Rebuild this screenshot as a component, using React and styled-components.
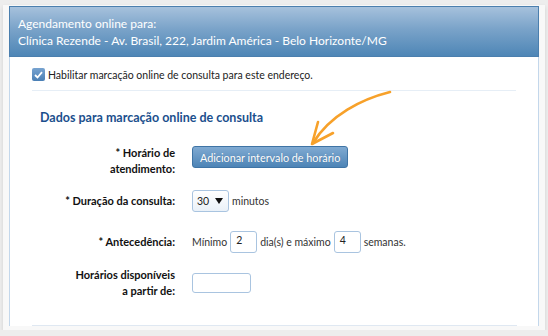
import React from "react";
import styled, { createGlobalStyle } from "styled-components";

const Global = createGlobalStyle`
  body {
    margin: 0;
    background: #ededed;
    font-family: Lato, "Open Sans", sans-serif;
  }
`;

const Page = styled.div`
  padding: 5px 3px 0 3px;
  width: 542px;
`;

const Card = styled.div`
  background: #f8f8f8;
  padding: 1px 6px 4px 6px;
  box-shadow: 0 2px 4px rgba(0, 0, 0, 0.12);
`;

const Header = styled.div`
  background: linear-gradient(to bottom, #a6c1dc 0%, #7aa3c9 45%, #4e86b6 100%);
  border: 1px solid #4b7fae;
  color: #fff;
  font-size: 12px;
  line-height: 17px;
  padding: 8px 8px 7px 8px;
`;

const Body = styled.div`
  position: relative;
  background: #fff;
  border-left: 1px solid #c3d7eb;
  border-right: 1px solid #c3d7eb;
  padding: 11px 22px 0 22px;
  height: 269px;
  box-sizing: border-box;
`;

const CheckRow = styled.label`
  display: flex;
  align-items: center;
  gap: 3px;
  font-size: 10.5px;
  color: #222;
  padding-bottom: 9px;
  border-bottom: 1px solid #e6eef6;
`;

const Check = styled.span`
  width: 13px;
  height: 13px;
  border-radius: 2px;
  background: linear-gradient(#77a3d0, #4a7fb5);
  display: flex;
  align-items: center;
  justify-content: center;
`;

const SectionTitle = styled.h3`
  margin: 19px 0 20px 8px;
  font-size: 12.5px;
  font-weight: 700;
  color: #1b4f8d;
`;

const Form = styled.div`
  display: grid;
  grid-template-columns: 143px 1fr;
  column-gap: 17px;
`;

const Label = styled.div`
  text-align: right;
  font-weight: 700;
  font-size: 11px;
  line-height: 16px;
  color: #111;
  align-self: ${(p) => p.$align || "center"};
`;

const Field = styled.div`
  display: flex;
  align-items: ${(p) => p.$align || "center"};
  gap: 3px;
  font-size: 10.5px;
  color: #333;
`;

const Gap = styled.div`
  grid-column: 1 / 3;
  height: ${(p) => p.$h}px;
`;

const Button = styled.button`
  font-family: inherit;
  font-size: 10.8px;
  color: #fff;
  height: 22px;
  padding: 0 7px;
  margin-top: 1px;
  border: 1px solid #3f74a5;
  border-radius: 3px;
  background: linear-gradient(#80aad2, #4d84b6);
  text-shadow: 0 0 1px rgba(0, 0, 0, 0.2);
`;

const Select = styled.div`
  width: 37px;
  height: 22px;
  box-sizing: border-box;
  border: 1px solid #a9c4e0;
  border-radius: 3px;
  background: linear-gradient(#fff, #eaf1f8);
  display: flex;
  align-items: center;
  justify-content: space-between;
  padding: 0 5px 0 4px;
  font-size: 10.5px;
  color: #222;
`;

const Input = styled.div`
  width: ${(p) => p.$w}px;
  height: ${(p) => p.$hh || 22}px;
  box-sizing: border-box;
  border: 1px solid #a9c4e0;
  border-radius: 3px;
  background: #fff;
  padding: 2px 5px;
  font-size: 10.5px;
  color: #222;
`;

const BottomLine = styled.div`
  position: absolute;
  left: 22px;
  right: 21px;
  bottom: 0;
  border-top: 1px solid #dfe8f2;
`;

const Arrow = styled.svg`
  position: absolute;
  left: 290px;
  top: 30px;
  pointer-events: none;
`;

export default function App() {
  return (
    <Page>
      <Global />
      <Card>
        <Header>
          Agendamento online para:
          <br />
          Clínica Rezende - Av. Brasil, 222, Jardim América - Belo Horizonte/MG
        </Header>
        <Body>
          <CheckRow>
            <Check>
              <svg width="9" height="8" viewBox="0 0 9 8">
                <path d="M1 4 L3.5 6.5 L8 1.2" stroke="#fff" strokeWidth="1.8" fill="none" />
              </svg>
            </Check>
            Habilitar marcação online de consulta para este endereço.
          </CheckRow>
          <SectionTitle>Dados para marcação online de consulta</SectionTitle>
          <Form>
            <Label $align="start">
              * Horário de
              <br />
              atendimento:
            </Label>
            <Field $align="flex-start">
              <Button>Adicionar intervalo de horário</Button>
            </Field>
            <Gap $h={13} />
            <Label>* Duração da consulta:</Label>
            <Field>
              <Select>
                30
                <svg width="8" height="6" viewBox="0 0 8 6">
                  <path d="M0 0 H8 L4 6 Z" fill="#111" />
                </svg>
              </Select>
              minutos
            </Field>
            <Gap $h={19} />
            <Label>* Antecedência:</Label>
            <Field>
              Mínimo <Input $w={27}>2</Input> dia(s) e máximo <Input $w={27}>4</Input> semanas.
            </Field>
            <Gap $h={14} />
            <Label>
              Horários disponíveis
              <br />
              a partir de:
            </Label>
            <Field>
              <Input $w={59} $hh={20} />
            </Field>
          </Form>
          <BottomLine />
          <Arrow width="110" height="70" viewBox="0 0 110 70">
            <path
              d="M90 5 C 62 12, 30 28, 13 56"
              stroke="#f7a12a"
              strokeWidth="2.6"
              fill="none"
              strokeLinecap="round"
            />
            <path
              d="M18 35 L12 57 L33 46"
              stroke="#f7a12a"
              strokeWidth="2.6"
              fill="none"
              strokeLinecap="round"
              strokeLinejoin="round"
            />
          </Arrow>
        </Body>
      </Card>
    </Page>
  );
}
